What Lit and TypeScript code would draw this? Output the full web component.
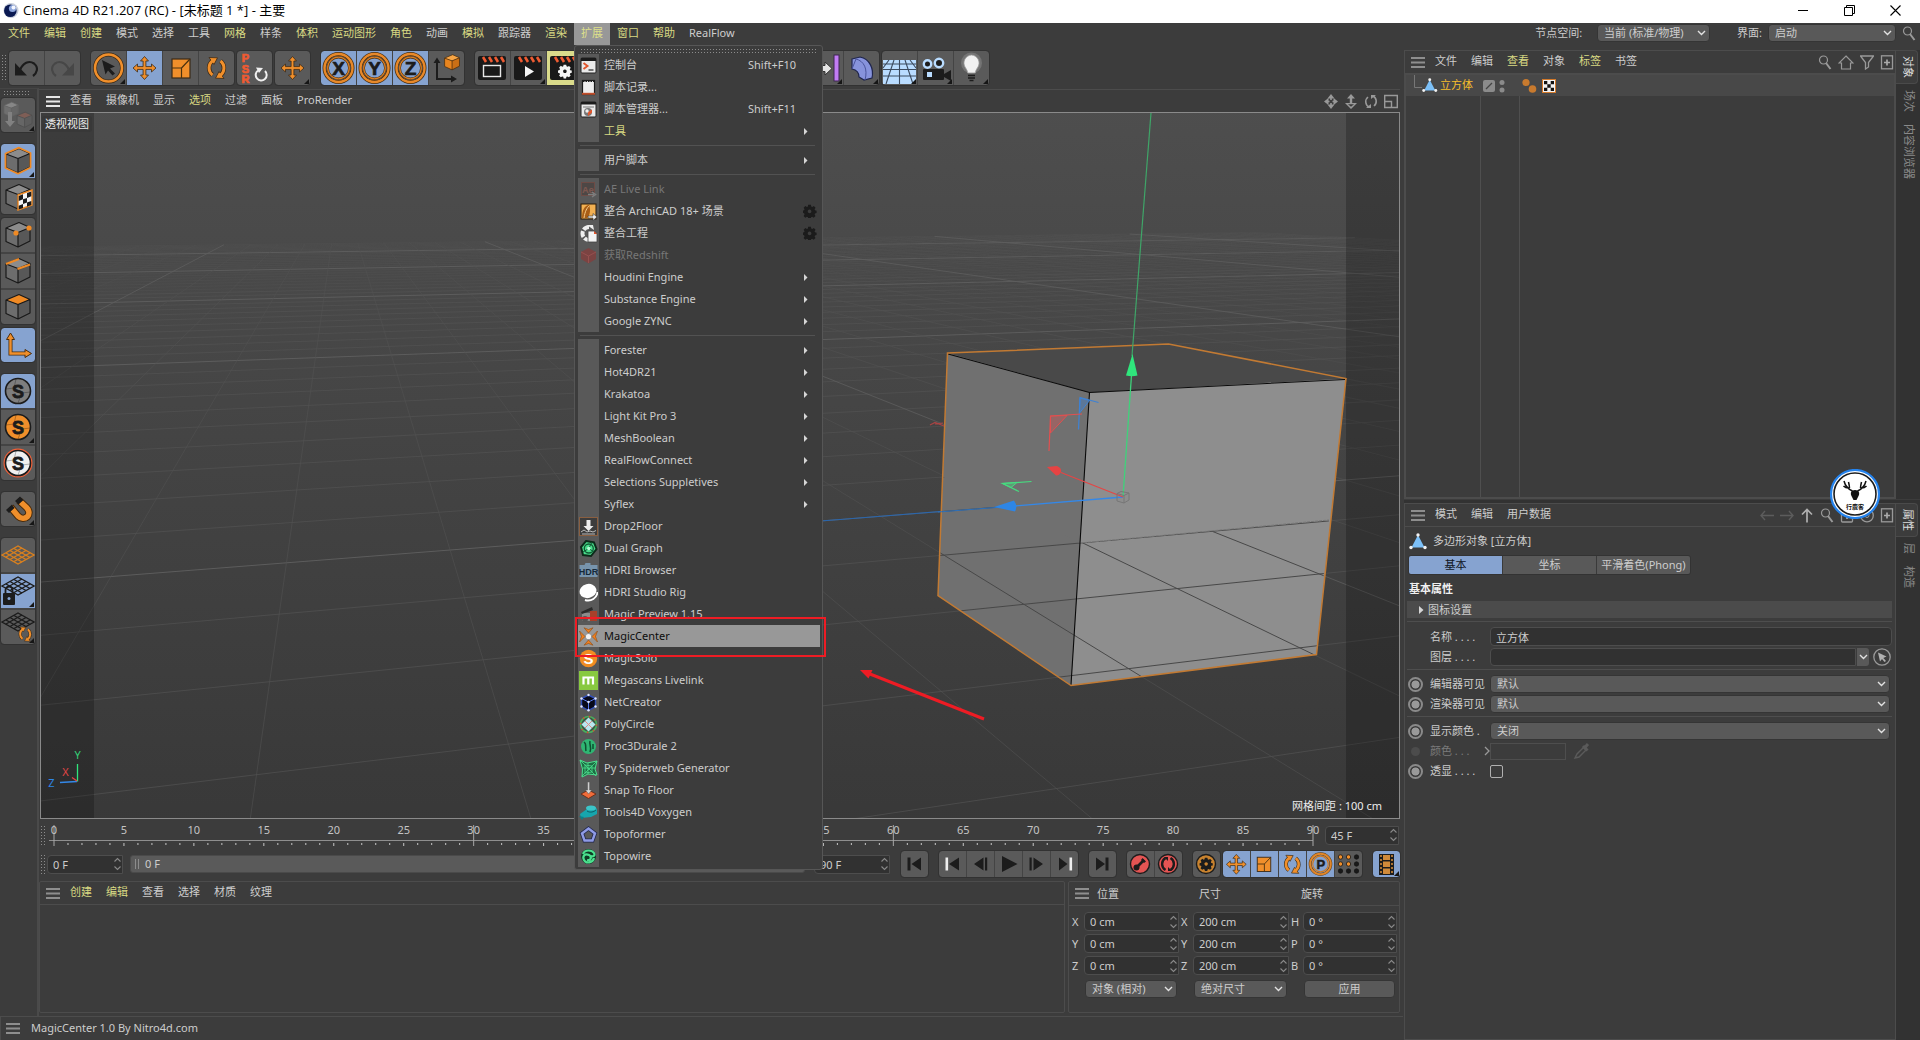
import { LitElement, html, svg, css, nothing } from "lit";
import { customElement } from "lit/decorators.js";
import { classMap } from "lit/directives/class-map.js";

const OR = "#f08f2b";
const DK = "#1c1c1c";

const icon = (w: number, h: number, body: unknown) => html`<svg class="ic" width=${w} height=${h} viewBox="0 0 ${w} ${h}" aria-hidden="true">${body}</svg>`;

/* ---------- shared glyph parts ---------- */
const corner = (w: number, h: number) => svg`<path d="M${w - 1} ${h - 1}v-5l-5 5z" fill="#161616"/>`;
const moveShape = (fill: string) => svg`<path d="M12 0.5L16 5H13.400V10.600H19V8L23.500 12L19 16V13.400H13.400V19H16L12 23.500L8 19H10.600V13.400H5V16L0.500 12L5 8V10.600H10.600V5H8Z" fill=${fill} stroke="#3a2a18" stroke-width=".8"/>`;
const rotateShape = (fill: string) => svg`
  <g fill="none" stroke="#3a2a18" stroke-width="4.400"><path d="M8 19A9 9 0 0 1 8.500 4.500"/><path d="M16 5A9 9 0 0 1 15.500 19.500"/></g>
  <path d="M4.500 1.500L13 1.800L9.500 8.500ZM19.500 22.500L11 22.200L14.500 15.500Z" fill=${fill} stroke="#3a2a18" stroke-width=".8"/>
  <g fill="none" stroke=${fill} stroke-width="3"><path d="M8 19A9 9 0 0 1 8.500 4.500"/><path d="M16 5A9 9 0 0 1 15.500 19.500"/></g>`;
const scaleShape = svg`<rect x="1" y="1" width="18" height="19" fill=${OR} stroke="#3a2a18" stroke-width="1.200"/><path d="M1 10H10.500V20M10.500 10L19 1" fill="none" stroke="#4a3210" stroke-width="1.200"/>`;
const gearPath = "M6.500 1h3.400l.4 2 1.300.6 1.900-1.100 2.200 2.300-1.200 1.800.5 1.300 2 .5v2.900l-2 .5-.5 1.200 1.100 1.900-2.200 2.200-1.900-1.200-1.400.6-.4 2H6.600l-.5-2-1.300-.6-1.900 1.200-2.200-2.200 1.200-1.900-.5-1.300-2-.5V8.200l2-.4.5-1.300L.8 4.600l2.200-2.200 1.900 1.200 1.200-.6zM8.200 7a2.300 2.300 0 1 0 .01 0z";
const cubeShape = (top = "#8c8c8c", left = "#6d6d6d", right = "#585858", edge = "#191919") => svg`
  <path d="M5 9L18 3.500L29 8.500L17 13.500Z" fill=${top}/><path d="M5 9L17 13.500V28L5 22.500Z" fill=${left}/><path d="M29 8.500L17 13.500V28L29 22Z" fill=${right}/>
  <path d="M5 9L18 3.500L29 8.500V22L17 28L5 22.500ZM5 9L17 13.500L29 8.500M17 13.500V28" fill="none" stroke=${edge} stroke-width="1.200" stroke-linejoin="round"/>`;

/* ---------- main toolbar (35 x 34) ---------- */
const curl = (c: string) => svg`<path d="M6 12V24.500H18Z" fill=${c}/><path d="M11 19C14 12 20 9 25 12.500C30 16.500 28 22 24 25" fill="none" stroke=${c} stroke-width="2.200"/>`;
const axisLetter = (l: string) => svg`<circle cx="17.500" cy="17" r="14" fill="none" stroke="#4a2f10" stroke-width="4"/><circle cx="17.500" cy="17" r="14" fill="none" stroke="#e8892a" stroke-width="2.400"/><circle cx="17.500" cy="17" r="10.800" fill="#86a3d0" stroke="#4a2f10" stroke-width="2.400"/><circle cx="17.500" cy="17" r="10.800" fill="none" stroke="#d87e24" stroke-width="1.300"/><text x="17.500" y="24" text-anchor="middle" class="heavy" font-size="19" fill=${DK} stroke=${DK} stroke-width=".7">${l}</text>`;
const clapper = (inner: unknown) => svg`<rect x="3" y="5" width="28" height="24" rx="2" fill="#191919"/><path d="M8 6l3 5M14 6l3 5M20 6l3 5M26 6l3 5" stroke="#ee5b32" stroke-width="2.600"/>${inner}`;

const TB: Record<string, unknown> = {
  undo: curl(DK),
  redo: svg`<g transform="translate(35 0) scale(-1 1)">${curl("#474747")}</g>`,
  select: svg`<circle cx="17.500" cy="17" r="13.500" fill="none" stroke="#3a2a18" stroke-width="4"/><circle cx="17.500" cy="17" r="13.500" fill="none" stroke=${OR} stroke-width="2.600"/><path d="M11 9L24 15.500L19 17.500L24 22.500L21.500 24.500L17 19.500L14.500 23.500Z" fill=${DK}/>${corner(35, 34)}`,
  move: svg`<g transform="translate(5.500 5)">${moveShape(OR)}</g>`,
  scale: svg`<g transform="translate(8 7)">${scaleShape}</g>`,
  rotate: svg`<g transform="translate(5.500 5)">${rotateShape(OR)}</g>`,
  psr: svg`<g class="heavy" font-size="11" fill="#ef5a31" stroke="#ef5a31" stroke-width=".7" text-anchor="middle"><text x="8.500" y="11">P</text><text x="8.500" y="21.500">S</text><text x="8.500" y="32">R</text></g><path d="M21 19.500A5.500 5.500 0 1 0 28 20" fill="none" stroke="#f0f0f0" stroke-width="2"/><path d="M19 16.500L26 17L22 22Z" fill="#f0f0f0"/>`,
  move2: svg`<g transform="translate(5.500 5)">${moveShape(OR)}</g>${corner(35, 34)}`,
  X: axisLetter("X"), Y: axisLetter("Y"), Z: axisLetter("Z"),
  coord: svg`<path d="M8 10V28H24" fill="none" stroke=${DK} stroke-width="2"/><path d="M4.500 12L8 6.500L11.500 12ZM22 24.500L28 28L22 31.500Z" fill=${DK}/><g transform="translate(12.500 1.500) scale(.62)">${cubeShape("#f7a545", "#e8851f", "#c96f16", "#4a2c0c")}</g>`,
  clap1: clapper(svg`<rect x="8.500" y="14.500" width="17" height="11" fill="none" stroke="#e8e8e8" stroke-width="1.400"/>`),
  clap2: svg`${clapper(svg`<path d="M14 15V26L23 20.500Z" fill="#f4f4f4"/>`)}${corner(35, 34)}`,
  clap3: clapper(svg`<g transform="translate(11.500 13) scale(.78)"><path d=${gearPath} fill="#f4f4f4" fill-rule="evenodd"/></g>`),
  array: svg`<path d="M4 14.500H17V11L24 17.500L17 24V20.500H4Z" fill="#e4e4e4" stroke="#333"/><rect x="26" y="4" width="5" height="26" fill="#c27cf5" stroke="#3c2650"/>${corner(35, 34)}`,
  bend: svg`<path d="M8 8L16 6C26 8 30 18 28 27L20 29L15 26C15 21 13 19 8 18Z" fill="#8793dc" stroke="#20264d" stroke-width="1.200"/><path d="M8 18L12 8C20 10 24 18 21 29" fill="none" stroke="#4a549c"/>${corner(35, 34)}`,
  floor: svg`<rect x="1" y="9" width="33" height="24" fill="#b9dcff"/><path d="M1 13H34M1 18.500H34M1 25H34M17.500 9V33M12 9L4 33M7 9L1 17M23 9L31 33M28 9L34 17" stroke="#3b4a5e" stroke-width="1.100"/>${corner(35, 34)}`,
  camera: svg`<rect x="5" y="18" width="21" height="11" rx="1" fill=${DK}/><path d="M26 23L33 19V30L26 26Z" fill=${DK}/><rect x="9" y="21" width="5" height="5" fill="#b9dcff"/><circle cx="9.500" cy="13" r="3.700" fill=${DK} stroke="#b9dcff" stroke-width="2.400"/><circle cx="21" cy="12" r="4.200" fill=${DK} stroke="#b9dcff" stroke-width="2.400"/>${corner(35, 34)}`,
  bulb: svg`<circle cx="17.500" cy="12" r="10.500" fill="#fff" opacity=".16"/><path d="M17.500 4A8 8 0 0 0 11 16C13 19 13.500 20 13.700 22H21.300C21.500 20 22 19 24 16A8 8 0 0 0 17.500 4Z" fill="#f1f1f1" stroke="#9a9a9a" stroke-width=".8"/><path d="M14 24.500H21M14 27H21M15.500 29.500H19.500" stroke=${DK} stroke-width="1.500"/>${corner(35, 34)}`,
};

/* ---------- mode strip (34 x 34, drawn one unit down) ---------- */
const netRows = (c: string) => svg`<g fill="none" stroke=${c} stroke-width="1.400"><path d="M1 11L17 2L33 11L17 20Z"/><path d="M5 9L21 18M9 6.500L25 15.500M13 4.500L29 13.500M5 13L21 4M9 15.500L25 6.500M13 17.500L29 9"/></g>`;
const snap = (fill: string, ring: string) => svg`<circle cx="17" cy="16" r="12.500" fill=${fill} stroke=${ring} stroke-width="1.600"/><path d="M5 14L13 13M21 18L29 17M15 4L13 13M20 20L17 28" stroke="#0004" fill="none"/><text x="17" y="22.500" class="heavy" font-size="18" text-anchor="middle" fill=${DK} stroke=${DK} stroke-width=".8">S</text>`;
const MB: Record<string, unknown> = {
  convert: svg`<g opacity=".75"><g transform="translate(0 1) scale(.6)">${cubeShape("#959595", "#777", "#6a6a6a", "#666")}</g><g transform="translate(13 11) scale(.62)">${cubeShape("#8a6055", "#6a6a6a", "#5f5f5f", "#4a4a4a")}</g><path d="M7 13h4v9h3l-5 6l-5-6h3z" fill="#8e8e8e"/></g>${corner(34, 33)}`,
  model: svg`${cubeShape()}<path d="M4.500 8.500L18 2.700L29.500 8V22.500L17 28.700L4.500 23Z" fill="none" stroke="#f08a24" stroke-width="1.800" stroke-linejoin="round"/>${corner(34, 33)}`,
  texture: svg`${cubeShape()}<path d="M17 14L31 9V24L17 29Z" fill="#f4f4f4" stroke="#f08a24" stroke-width="1.400"/><path d="M17.700 15L22 13.300V18.300L17.700 20ZM26 12L30.300 10.500V15.300L26 17ZM22 18.300L26 17V21.500L22 23ZM17.700 24.800L22 23V27L17.700 28.500ZM26 21.500L30.300 20V24L26 25.700Z" fill=${DK}/>`,
  points: svg`${cubeShape()}<circle cx="15" cy="14" r="2.600" fill="#f08a24"/><circle cx="28" cy="9" r="2.600" fill="#f08a24"/>`,
  edges: svg`${cubeShape()}<path d="M5 9L18 4M16.500 14L29 9.500" stroke="#f08a24" stroke-width="2"/>`,
  polys: cubeShape("#f08a24"),
  axis: svg`<path d="M9.500 9V24.500H25" fill="none" stroke="#4a2c0c" stroke-width="4"/><path d="M5.500 10.500L9.500 4L13.500 10.500ZM24 20.500L30.500 24.500L24 28.500Z" fill=${OR} stroke="#4a2c0c" stroke-width="1"/><path d="M9.500 9V24.500H25" fill="none" stroke=${OR} stroke-width="2.400"/>`,
  snapG: snap("#7e7e7e", DK),
  snapO: svg`${snap(OR, DK)}${corner(34, 33)}`,
  snapW: svg`<circle cx="17" cy="16" r="13.800" fill="none" stroke="#f06038" stroke-width="1.400"/>${snap("#f0f0f0", DK)}`,
  magnet: svg`<path d="M9.500 14L17 23C20 26 24 26 26.500 23.500C29 20.500 28 17 25.500 14.500L18 7.500" fill="none" stroke="#4a2c0c" stroke-width="7.500"/><path d="M9.500 14L17 23C20 26 24 26 26.500 23.500C29 20.500 28 17 25.500 14.500L18 7.500" fill="none" stroke=${OR} stroke-width="5.500"/><path d="M5 17L11 11.500L13.500 15L8 20ZM14 8L19 3.500L22.500 7L17.500 11.500Z" fill=${DK}/>${corner(34, 33)}`,
  grid: svg`<g transform="translate(0 5)">${netRows("#d9801f")}</g>`,
  gridLock: svg`${netRows(DK)}<rect x="2" y="18" width="12" height="12" rx="1" fill=${DK}/><path d="M4.500 18.500V15a3.500 3.500 0 0 1 7 0V18.500" fill="none" stroke=${DK} stroke-width="1.800"/><circle cx="8" cy="23.500" r="1.500" fill="#86a3d0"/>${corner(34, 33)}`,
  gridRot: svg`${netRows(DK)}<g transform="translate(16 15) scale(.68)">${rotateShape(OR)}</g>${corner(34, 33)}`,
};
for (const name of Object.keys(MB)) MB[name] = svg`<g transform="translate(0 1)">${MB[name]}</g>`;

/* ---------- playback (27 x 26) ---------- */
const PB: Record<string, unknown> = {
  first: svg`<path d="M6.500 6.500h3v13h-3zM20 6.500v13L10.500 13z" fill=${DK}/>`,
  prevKey: svg`<path d="M6.500 6.500h2.600v13H6.500z" fill="#eee"/><path d="M20 6.500v13L10 13z" fill=${DK}/>`,
  prev: svg`<path d="M16.500 6.500v13L7 13zM18 6.500h2.200v13H18z" fill=${DK}/>`,
  play: svg`<path d="M7 5L22.500 13L7 21Z" fill=${DK}/>`,
  next: svg`<path d="M10.500 6.500v13L20 13zM6.500 6.500h2.200v13H6.500z" fill=${DK}/>`,
  nextKey: svg`<path d="M8 6.500v13L16.500 13z" fill=${DK}/><path d="M18.500 6.500h2.600v13h-2.600z" fill="#eee"/>`,
  last: svg`<path d="M7 6.500v13L16 13zM16.500 6.500h3v13h-3z" fill=${DK}/>`,
  key: svg`<circle cx="13" cy="13" r="9.500" fill="#e35453" stroke=${DK} stroke-width="1.400"/><path d="M9 17L17 9" stroke=${DK} stroke-width="2.600"/><circle cx="9.500" cy="16.500" r="3" fill=${DK}/><path d="M15.500 7L19 10.500L17 12L14 9Z" fill=${DK}/>`,
  auto: svg`<circle cx="13" cy="13" r="9.500" fill="#e35453" stroke=${DK} stroke-width="1.400"/><path d="M10.500 7A7 7 0 0 0 10.500 19M15.500 7A7 7 0 0 1 15.500 19" fill="none" stroke=${DK} stroke-width="2.400"/><path d="M9 6h4v4zM17 20h-4v-4z" fill=${DK}/>`,
  opts: svg`<circle cx="13" cy="13" r="9.500" fill="#c9832f" stroke=${DK} stroke-width="1.400"/><g transform="translate(7 6) scale(.75)"><path d=${gearPath} fill=${DK} fill-rule="evenodd"/></g>`,
  move: svg`<g transform="translate(3 3) scale(.86)">${moveShape(OR)}</g>`,
  scale: svg`<g transform="translate(5.500 5.500) scale(.75)">${scaleShape}</g>`,
  rotate: svg`<g transform="translate(3 3) scale(.86)">${rotateShape(OR)}</g>`,
  P: svg`<circle cx="13.500" cy="13" r="10.300" fill="none" stroke="#5b3d18" stroke-width="3"/><circle cx="13.500" cy="13" r="10.300" fill="none" stroke="#e0862a" stroke-width="2"/><circle cx="13.500" cy="13" r="7.800" fill="#86a3d0" stroke="#d07c26" stroke-width="1.200"/><text x="13.800" y="17.500" class="heavy" font-size="13" text-anchor="middle" fill=${DK} stroke=${DK} stroke-width=".5">P</text>`,
  dots: svg`<g stroke="#161616" stroke-width=".8">${[5.5, 13.5, 21.5].map((x, i) => [6, 13, 20].map((y, j) => svg`<circle cx=${x} cy=${y} r="2.200" fill=${i < 2 && j < 2 ? OR : "#191919"}/>`))}</g>`,
  film: svg`<rect x="6" y="3" width="15" height="21" fill=${DK}/><path d="M10 4h7v5h-7zM10 10.500h7v5.500h-7zM10 17.500h7V23h-7z" fill="#d08a3a"/><path d="M8 4V24M19 4V24" stroke="#d08a3a" stroke-width="1.600" stroke-dasharray="2 2"/>${corner(27, 26)}`,
};

/* ---------- popup menu icons (19 x 19) ---------- */
const MI: Record<string, unknown> = {
  console: svg`<rect x="2" y="2" width="15" height="15" rx="1" fill="#e9e9e9" stroke="#222"/><path d="M2 2h15v3H2z" fill="#1b1b1b"/><path d="M4.500 7L8.500 10L4.500 13" fill="none" stroke="#e2552c" stroke-width="1.900"/><path d="M9.500 14h5" stroke="#333" stroke-width="1.300"/>`,
  log: svg`<rect x="3.500" y="2.500" width="12" height="14" fill="#eee" stroke="#1b1b1b" stroke-width="1.200"/><path d="M4 3h11" stroke="#1b1b1b" stroke-width="2.200" stroke-dasharray="1.500 1"/><path d="M3 15.800h13" stroke="#c04f2c" stroke-width="2"/>`,
  manager: svg`<rect x="2" y="2" width="15" height="15" rx="1" fill="#e9e9e9" stroke="#222"/><path d="M2 2h15v2.500H2z" fill="#1b1b1b"/><path d="M4 7h11" stroke="#777"/><circle cx="9" cy="12" r="4" fill="#777"/><path d="M9 12l4-2.500v3L9 16z" fill="#e2552c"/><circle cx="8" cy="11" r="1.700" fill="#eee"/>`,
  ae: svg`<rect x="2.500" y="2.500" width="13" height="13" fill="#4d4745" stroke="#6d4b45"/><text x="9" y="12.500" text-anchor="middle" font-size="9" font-weight="700" fill="#7b5750">Ae</text><path d="M9 14.500h6M13 12l3.500 2.500L13 17" stroke="#7e7e7e" stroke-width="1.500" fill="none"/>`,
  archi: svg`<rect x="2" y="2" width="15" height="15" fill="#f2b052" stroke="#2a1a0a"/><path d="M3 16C3 8 6 3 10 3C12 8 11 13 8 16Z" fill="#a85d16"/><path d="M5 16C6 9 8 6 10 4" stroke="#f6cf8d" fill="none"/><path d="M9 14h5v-2.500l4 3.500l-4 3.500V16H9z" fill="#eee" stroke="#333" stroke-width=".6"/>`,
  project: svg`<path d="M10 3A6.500 6.500 0 1 0 10 16" fill="none" stroke="#eee" stroke-width="4" stroke-dasharray="6 1.500"/><path d="M9 7h6l3 3v8H9z" fill="#f4f4f4" stroke="#444" stroke-width=".8"/><path d="M15 7v3h3z" fill="#e2552c"/><path d="M8 1h6l1 5z" fill="#eee"/>`,
  redshift: svg`<path d="M9.500 2L17 6V13L9.500 17.500L2 13V6Z" fill="#7b4342"/><path d="M2 6L9.500 10L17 6M9.500 10V17" stroke="#96504f" fill="none"/>`,
  drop: svg`<rect x=".5" y=".5" width="18" height="18" fill="#3d3d3d" stroke="#8a5f40"/><path d="M7.500 3h4v6h3l-5 5l-5-5h3z" fill="#ececec"/><path d="M2 15l3-2 3 2 3-1 3 1 3-1.500M3 17h13" stroke="#bbb" fill="none"/>`,
  dual: svg`<path d="M7 2L15 3.500L17.500 10L12 17L4 16L2 8Z" fill="#49dc8b" stroke="#0d2a1a" stroke-width="2"/><circle cx="9.800" cy="9.500" r="4.500" fill="none" stroke="#0f5a33" stroke-width="1.300"/><path d="M9.800 9.500L13 3M9.800 9.500L4 13M9.800 9.500L15 13" stroke="#0f5a33"/><circle cx="9.800" cy="9.500" r="1.700" fill="#b5ffd5"/>`,
  hdr: svg`<path d="M.5 4h5l1-2h5v2h7v12H.5z" fill="#7794ad"/><text x="9.500" y="14" text-anchor="middle" class="heavy" font-size="9" fill="#15293a">HDR</text>`,
  studio: svg`<ellipse cx="9" cy="8" rx="8.500" ry="7" transform="rotate(-15 9 8)" fill="#fff"/><path d="M6 17C12 19 18 15 18.500 9" fill="none" stroke="#fff" stroke-width="2"/>`,
  preview: svg`<rect x="3" y="8" width="9" height="8" fill="#8b8b8b"/><path d="M11 6h7v10h-7z" fill="#a8402a"/><path d="M2 7L13 2l1 3L3 9z" fill="#2a2a2a"/><circle cx="6" cy="14" r="3" fill="#555"/>`,
  center: svg`<g fill="#f07f1f" stroke="#8b4a12" stroke-width=".6"><path d="M5 .8L9.500 2.500L14 .8L9.500 6Z"/><path d="M5 18.200L9.500 16.500L14 18.200L9.500 13Z"/><path d="M.5 4L6 9.500L.5 15L2.500 9.500Z"/><path d="M18.500 4L13 9.500L18.500 15L16.500 9.500Z"/></g><circle cx="9.500" cy="9.500" r="2.600" fill="#f2f2f2"/>`,
  solo: svg`<circle cx="9.500" cy="9.500" r="8.700" fill="#f28c22"/><text x="9.500" y="15" text-anchor="middle" class="heavy" font-size="15" fill="#fff">S</text>`,
  mega: svg`<path d="M0 0h19v19H0z" fill="#88c940"/><path d="M4.500 13.500V6.500h9.500v7M9.300 6.500v7" fill="none" stroke="#fff" stroke-width="2.200"/>`,
  net: svg`<path d="M9.500 2L16.500 5.500V13.500L9.500 17.500L2.500 13.500V5.500Z" fill="#07091a" stroke="#3350b8" stroke-width="1.400"/><path d="M2.500 5.500L9.500 9L16.500 5.500M9.500 9V17" stroke="#5b7df0" fill="none"/><g fill="#dfe6ff"><circle cx="9.500" cy="2" r="1.200"/><circle cx="16.500" cy="5.500" r="1.200"/><circle cx="16.500" cy="13.500" r="1.200"/><circle cx="9.500" cy="17.300" r="1.200"/><circle cx="2.500" cy="13.500" r="1.200"/><circle cx="2.500" cy="5.500" r="1.200"/><circle cx="9.500" cy="9" r="1.200"/></g>`,
  poly: svg`<circle cx="9.500" cy="9.500" r="8" fill="#3a5a48" stroke="#48b05c" stroke-width="1.600"/><circle cx="9.500" cy="9.500" r="8" fill="none" stroke="#d84a32" stroke-width="1.600" stroke-dasharray="1.500 4.800"/><path d="M9.500 2.500L16.500 9.500L9.500 16.500L2.500 9.500Z" fill="#b9e6ee"/><path d="M6 6L13 13M13 6L6 13" stroke="#e0897f" fill="none"/>`,
  proc: svg`<circle cx="9.500" cy="9.500" r="7.500" fill="#2fb673"/><path d="M5 5C8 7 6 10 7 14M11 4C10 8 13 10 11 15M14 7v5" stroke="#0e4f30" stroke-width="1.500" fill="none"/>`,
  spider: svg`<path d="M1 1L8 4L18 2L16 10L18 16L9 15L3 18L3.500 10Z" fill="#1d6e44" stroke="#4be08e"/><path d="M1 1L17 17M18 2L3 17M9 4V15M4 9h13M6 6l7 1 0 6-7 1z" stroke="#4be08e" stroke-width=".8" fill="none"/>`,
  snapf: svg`<path d="M9.500 9L17 13L9.500 17.500L2 13Z" fill="#f06c3a" stroke="#612411" stroke-width=".8"/><path d="M8.600 1h2v8h2.200l-3.200 4l-3.200-4h2.200z" fill="#d6d6d6" stroke="#555" stroke-width=".5"/>`,
  vox: svg`<path d="M1 11L8 6L16 4L18 6V11L12 14L2 15Z" fill="#16a5ad"/><ellipse cx="12" cy="5" rx="5" ry="2.500" fill="#3cc5c9"/><path d="M0 13l5 1-2 3z" fill="#0d7e88"/><path d="M8 8c3 2 7 1 9-1" stroke="#0a5d66" fill="none"/>`,
  topof: svg`<path d="M9.500 3.500L16 8.500L13.500 15.500H5.500L3 8.500Z" fill="none" stroke="#20264d" stroke-width="4"/><path d="M9.500 3.500L16 8.500L13.500 15.500H5.500L3 8.500Z" fill="none" stroke="#8f9be6" stroke-width="2.400"/>`,
  topow: svg`<circle cx="9.500" cy="9.500" r="7.500" fill="#0f3a24"/><path d="M4 7C6 2 13 3 15 6C17 10 12 10 10 8C6 6 3 9 5 13C7 17 14 16 15 11M8 13C11 14 13 11 11 9" fill="none" stroke="#4be08e" stroke-width="2.200"/>`,
};

type Item = { t: string; i?: string; k?: string; sub?: boolean; gear?: boolean; dim?: boolean; hot?: boolean; on?: boolean };
const MENU: Item[][] = [
  [{ t: "控制台", i: "console", k: "Shift+F10" }, { t: "脚本记录...", i: "log" }, { t: "脚本管理器...", i: "manager", k: "Shift+F11" }, { t: "工具", sub: true, hot: true }],
  [{ t: "用户脚本", sub: true }],
  [{ t: "AE Live Link", i: "ae", dim: true }, { t: "整合 ArchiCAD 18+ 场景", i: "archi", gear: true }, { t: "整合工程", i: "project", gear: true }, { t: "获取Redshift", i: "redshift", dim: true }, { t: "Houdini Engine", sub: true }, { t: "Substance Engine", sub: true }, { t: "Google ZYNC", sub: true }],
  [
    ...["Forester", "Hot4DR21", "Krakatoa", "Light Kit Pro 3", "MeshBoolean", "RealFlowConnect", "Selections Suppletives", "Syflex"].map((t) => ({ t, sub: true })),
    { t: "Drop2Floor", i: "drop" }, { t: "Dual Graph", i: "dual" }, { t: "HDRI Browser", i: "hdr" }, { t: "HDRI Studio Rig", i: "studio" },
    { t: "Magic Preview 1.15", i: "preview" }, { t: "MagicCenter", i: "center", on: true }, { t: "MagicSolo", i: "solo" }, { t: "Megascans Livelink", i: "mega" },
    { t: "NetCreator", i: "net" }, { t: "PolyCircle", i: "poly" }, { t: "Proc3Durale 2", i: "proc" }, { t: "Py Spiderweb Generator", i: "spider" },
    { t: "Snap To Floor", i: "snapf" }, { t: "Tools4D Voxygen", i: "vox" }, { t: "Topoformer", i: "topof" }, { t: "Topowire", i: "topow" },
  ],
];

const MAIN_MENU = "*文件 *编辑 *创建 模式 选择 工具 *网格 样条 *体积 *运动图形 *角色 动画 *模拟 跟踪器 *渲染 *扩展 *窗口 *帮助 RealFlow".split(" ");

const bars = icon(14, 11, svg`<path d="M0 1h14M0 5.500h14M0 10h14" stroke="currentColor" stroke-width="2"/>`);
const chevron = icon(9, 6, svg`<path d="M1 1L4.500 4.500L8 1" fill="none" stroke="#e2e2e2" stroke-width="1.400"/>`);
const spinner = icon(9, 14, svg`<path d="M1.500 4.500L4.500 1.500L7.500 4.500M1.500 9.500L4.500 12.500L7.500 9.500" fill="none" stroke="#8a8a8a" stroke-width="1.100"/>`);
const glass = icon(14, 15, svg`<circle cx="5.500" cy="5" r="4" fill="none" stroke="#999" stroke-width="1.200"/><path d="M8 8L12.500 14" stroke="#999" stroke-width="2"/>`);
const plusBox = icon(14, 15, svg`<rect x="1.500" y=".8" width="11" height="13" fill="none" stroke="#999" stroke-width="1.300"/><path d="M4 7.500h6M7 4.500v6" stroke="#aaa" stroke-width="1.700"/>`);
const polyShape = svg`<path d="M9 2L15.500 14.500H2.500Z" fill="#7cc0f8"/><g fill="#f2f2f2"><circle cx="9" cy="2" r="1.700"/><circle cx="2" cy="14.500" r="1.700"/><circle cx="16" cy="14.500" r="1.700"/></g>`;
const polyObj = icon(18, 17, polyShape);
const polySmall = icon(16, 15, svg`<g transform="scale(.86)">${polyShape}</g>`);

const select = (label: string, value: string) => html`<span class="sel"><select aria-label=${label}><option>${value}</option></select>${chevron}</span>`;
const num = (label: string, value: string, show = true) => html`<label class="num">${show ? html`<span>${label}</span>` : nothing}<span class="numbox"><input type="text" aria-label=${label} .value=${value} />${spinner}</span></label>`;
const menus = (list: string) => list.split(" ").map((m) => html`<button class=${classMap({ mi: true, hot: m[0] === "*" })}>${m.replace("*", "")}</button>`);

/* ---------- perspective floor grid ---------- */
const HORIZON = 187;
const VX = 5090;
const rowY = (k: number, x: number) => HORIZON + (1 / (0.002531 + 0.0003008 * k)) * ((VX - x) / 5050);
const COL_VP = { x: 340, y: 184 };
const colSlope = (n: number) => (250.4 + 280.3 * n - COL_VP.x) / 634;
const EDGE_COL = 43;
const FAR_ROW = 47;

/* crossing of column n with row k */
function cross(n: number, k: number): [number, number] {
  const s = colSlope(n);
  const a = 1 / (0.002531 + 0.0003008 * k) / 5050;
  const y = (HORIZON + a * (VX - COL_VP.x + s * COL_VP.y)) / (1 + a * s);
  return [COL_VP.x + s * (y - COL_VP.y), y];
}

function floorGrid(minor: string, major: string, fade = true) {
  const out = [];
  for (let k = -4; k <= FAR_ROW; k++) {
    const [x2, y2] = cross(EDGE_COL, k);
    const big = k % 10 === 0;
    const o = !fade ? 1 : big ? 0.95 : k > 22 ? 0.45 : 0.7;
    out.push(svg`<line x1="0" y1=${rowY(k, 0)} x2=${x2} y2=${y2} stroke=${big ? major : minor} stroke-opacity=${o}/>`);
  }
  for (let n = -13; n <= EDGE_COL; n++) {
    const [x1, y1] = cross(n, FAR_ROW);
    const big = (n + 4) % 10 === 0;
    const o = !fade ? 1 : big ? 0.8 : n > 12 || n < -4 ? 0.4 : 0.6;
    out.push(svg`<line x1=${x1} y1=${y1} x2=${COL_VP.x + colSlope(n) * 700} y2=${COL_VP.y + 700} stroke=${big ? major : minor} stroke-opacity=${o}/>`);
  }
  return out;
}

const scene = html`<svg class="scene" viewBox="41 113 1358 705" preserveAspectRatio="xMidYMid slice" role="img" aria-label="透视视图">
  <defs>
    <linearGradient id="bg" x1="0" y1="0" x2="0" y2="1"><stop offset="0" stop-color="#4e4e4e"/><stop offset="1" stop-color="#383838"/></linearGradient>
    <clipPath id="front"><path d="M943 477L1080 543L1329 520L1316 655L1071 686L938 596Z"/></clipPath>
  </defs>
  <rect x="0" y="100" width="1500" height="740" fill="url(#bg)"/>
  ${floorGrid("#525252", "#5e5e5e")}
  <path d="M41 113H94V818H41ZM1346 113H1399V818H1346Z" fill="#000" fill-opacity=".22"/>
  <path d="M1123 497L840 519.500L700 530" stroke="#2a66ad" stroke-width="1.200" fill="none"/>
  <path d="M947.500 353L1168.500 344L1346 378.500L1089.500 392.500Z" fill="#494949"/>
  <path d="M947.500 353L1089.500 392.500L1071 685.500L938 595.500Z" fill="#707070"/>
  <path d="M1089.500 392.500L1346 378.500L1316.500 654.500L1071 685.500Z" fill="#8e8e8e"/>
  <g clip-path="url(#front)">${floorGrid("#484848", "#484848", false)}</g>
  <path d="M1080 543L1329 520" stroke="#777" stroke-dasharray="3 1"/>
  <path d="M948 354L1089.500 392.500L1345 379.500M1089.500 392.500L1071 685" fill="none" stroke="#0a0a0a" stroke-width="1.100"/>
  <path d="M947.500 353L1168.500 344L1346 378.500L1316.500 654.500L1071 685.500L938 595.500Z" fill="none" stroke="#c27a33" stroke-width="1.500"/>
  <path d="M1151 113L1132 356" stroke="#3fa568" stroke-width="1.200"/>
  <path d="M1131.500 375L1123 497" stroke="#3fd27b" stroke-width="1.300"/>
  <path d="M1132.500 354L1126 375.500Q1132 377 1137.500 375.500Z" fill="#2fe67c"/>
  <path d="M1123 497L1015 506" stroke="#3488e8" stroke-width="1.300"/><path d="M1015 506L938 512" stroke="#2f70b8" stroke-width="1.200"/>
  <path d="M994 507L1014 500.500Q1018 506 1015 511.500Z" fill="#2e86e6"/>
  <path d="M1123 497L1061 472.500" stroke="#e54545" stroke-width="1.200"/>
  <path d="M1047 467L1057 466Q1062 468 1061 472Q1059 476 1056 475.500Z" fill="#e64343"/>
  <path d="M1117 493.500L1121 491.500L1129 493V500L1124 503L1117 501ZM1117 493.500L1124 495.500L1129 493M1124 495.500V503" fill="none" stroke="#777"/>
  <path d="M1098.500 402.500L1080 397.500L1078.500 429.500" fill="none" stroke="#3e82d4" stroke-width="1.200"/><path d="M1080 398L1089.500 400.500L1079.500 413Z" fill="#3e82d4" fill-opacity=".4" stroke="#3e82d4"/>
  <path d="M1082 414L1050.500 416L1049 451" fill="none" stroke="#e05050" stroke-width="1.200"/><path d="M1050.500 416L1067 415.500L1050.500 433Z" fill="#e05050" fill-opacity=".35" stroke="#e05050"/>
  <path d="M1031.500 481.500L1002.500 483.500L1019 491.500" fill="none" stroke="#47dc80" stroke-width="1.200"/><path d="M1002.500 483.500L1017 482.500L1011 487.500Z" fill="#47dc80" fill-opacity=".4" stroke="#47dc80"/>
  <path d="M930 425L935 422.500L944 426M935 424L943 423" fill="none" stroke="#a84444" stroke-width="1.200"/>
  <path d="M77.500 764V781.500" stroke="#2fe67c" stroke-width="1.300"/><path d="M60 782.500L77 781.500" stroke="#3488e8" stroke-width="1.500"/><path d="M72 777.500L77 781" stroke="#e54545" stroke-width="1.300"/>
  <g font-size="11" text-anchor="middle"><text x="77.500" y="759" fill="#35d077">Y</text><text x="65.500" y="776" fill="#e04545">X</text><text x="51.500" y="787" fill="#2e86e6">Z</text></g>
  <path d="M984 719L870 674" stroke="#ee1c24" stroke-width="3"/><path d="M860 670L872.500 670L868.500 678.500Z" fill="#ee1c24"/>
</svg>`;

@customElement("app-root")
export class AppRoot extends LitElement {
  static styles = css`
    :host { display: flex; flex-direction: column; min-height: 100vh; background: #3c3c3c; color: #cdcdcd; font: 11px/16px "Noto Sans", "Noto Sans CJK SC", sans-serif; overflow: hidden; }
    * { box-sizing: border-box; }
    button, input, select { font: inherit; color: inherit; border: 0; margin: 0; padding: 0; background: none; border-radius: 0; outline: 0; }
    .ic { display: block; flex: none; }
    .heavy { font-family: "Liberation Sans", sans-serif; font-weight: 900; }
    .title { display: flex; align-items: center; height: 23px; background: #fff; color: #000; font: 13px/18px "Open Sans", "Noto Sans CJK SC", sans-serif; padding: 0 2px 3px 3px; }
    .title h1 { font: inherit; margin: 0 auto 0 4px; }
    .win { width: 46px; height: 19px; display: grid; place-items: center; }
    .menubar { display: flex; height: 22px; padding: 0 2px 0 1px; }
    .mi { padding: 0 7px 2px; white-space: nowrap; height: 22px; }
    .hot { color: #d8d983; }
    .open { position: relative; }
    .open > .mi { background: #989898; color: #dfe08a; }
    .push { margin-left: auto; }
    .opt { display: flex; align-items: center; gap: 6px; height: 20px; }
    .opt .sel { width: 113px; }
    .opt + .opt { margin-left: 27px; }
    .opt.wide .sel { width: 128px; }
    .find { margin: 3px 2px 0 6px; align-self: flex-start; }
    .sel { display: inline-grid; align-items: center; height: 18px; }
    .sel > * { grid-area: 1 / 1; }
    .sel .ic { justify-self: end; margin-right: 4px; pointer-events: none; }
    .sel select { appearance: none; width: 100%; height: 18px; background: #595959; border: 1px solid #353535; border-radius: 4px; padding: 0 16px 1px 6px; }
    .body { flex: 1; display: grid; grid-template-columns: minmax(0, 1fr) 517px; }
    .main { display: flex; flex-direction: column; min-width: 0; }
    .tools { display: flex; align-items: center; height: 44px; padding: 2px 0 0 1px; }
    .grip { width: 5px; height: 28px; flex: none; background: radial-gradient(circle, #8c8c8c 0.7px, transparent 1px) 0 0 / 3px 3px; }
    .group { display: flex; gap: 1px; border-radius: 3px; overflow: hidden; outline: 1px solid #323232; background: #444; }
    .tools .group { margin-left: 11px; }
    .tools .group.near { margin-left: 3px; }
    .tools .group.first { margin-left: 3px; }
    .tools .group.late { margin-left: 226px; }
    .tb { background: #5a5a5a; display: block; }
    .tb.on { background: #86a3d0; }
    .tb.warn { background: #dadb8b; }
    .work { flex: 1; display: flex; }
    .modes { width: 39px; padding: 1px 0 0 1px; display: flex; flex-direction: column; flex: none; border-top: 1px solid #454545; border-right: 2px solid #4a4a4a; margin-top: -1px; }
    .modes .group { flex-direction: column; gap: 2px; width: 34px; margin-bottom: 12px; }
    .modes .group.tight { margin-bottom: 4px; }
    .hgrip { width: 28px; height: 5px; margin: 0 0 3px 2px; background: radial-gradient(circle, #8c8c8c 0.7px, transparent 1px) 0 0 / 3px 3px; }
    .center { flex: 1; display: flex; flex-direction: column; min-width: 0; margin-right: 3px; }
    .phead { display: flex; align-items: center; height: 23px; padding: 0 2px 0 7px; color: #cdcdcd; border-top: 1px solid #4c4c4c; }
    .phead .mi:first-of-type { margin-left: 3px; }
    .phead .mi { height: 20px; }
    .phead > .ic:first-child { color: #8e8e8e; }
    .phead.view > .ic:first-child { color: #e6e6e6; }
    .icons { display: flex; align-items: center; gap: 6px; margin-left: auto; }
    .view-box { flex: 1; position: relative; min-height: 400px; border: 1px solid #8a8a8a; margin-left: 1px; overflow: hidden; }
    .scene { position: absolute; inset: 0; width: 100%; height: 100%; display: block; }
    .tag { position: absolute; left: 1px; top: 3px; padding: 0 3px; color: #ececec; background: #383838; border-radius: 3px; }
    .tag.br { left: auto; top: auto; right: 14px; bottom: 4px; background: none; }
    .ruler { display: flex; height: 32px; padding: 6px 1px 6px 1px; }
    .ruler .grip, .play .grip { height: 20px; }
    .scale { flex: 1; min-width: 0; height: 26px; margin: -3px 12px 0 9px; overflow: visible; fill: #c4c4c4; }
    .num { display: flex; align-items: center; gap: 4px; }
    .numbox { display: grid; align-items: center; flex: 1; min-width: 0; }
    .numbox > * { grid-area: 1 / 1; }
    .numbox .ic { justify-self: end; margin-right: 1px; }
    .num input, .text { width: 100%; height: 19px; background: #313131; border: 1px solid #4d4d4d; border-radius: 4px 0 0 4px; padding: 0 12px 0 5px; }
    .ruler .num { width: 74px; }
    .play .num { width: 76px; }
    .play { display: flex; align-items: center; height: 26px; padding: 0 0 0 1px; margin-bottom: 4px; }
    .play .num { margin-left: 2px; }
    .play .num + .range { margin: 0 7px; }
    .range { flex: 1; min-width: 0; display: grid; height: 18px; align-items: center; background: #5a5a5a; border: 1px solid #4a4a4a; border-radius: 3px; }
    .range > * { grid-area: 1 / 1; }
    .range span { padding-left: 14px; }
    .range input { appearance: none; width: 100%; height: 10px; margin-left: 4px; }
    .range input::-webkit-slider-thumb { appearance: none; width: 4px; height: 10px; border: solid #8c8c8c; border-width: 0 1px; }
    .play .group { margin-left: 11px; }
    .play .group.near { margin-left: 3px; }
    .bottom { display: flex; gap: 3px; height: 132px; margin-bottom: 3px; }
    .panel { border: 1px solid #4c4c4c; border-radius: 2px; }
    .panel .phead { border-top: 0; border-bottom: 1px solid #4c4c4c; padding-left: 6px; }
    .mat { flex: 1; min-width: 0; }
    .coords { width: 332px; flex: none; }
    .coords .phead { height: 24px; }
    .coords .phead b { font-weight: 400; width: 102px; flex: none; }
    .coords .phead b:first-of-type { margin-left: 8px; }
    .cgrid { display: grid; grid-template-columns: 107px 108px 106px; column-gap: 2px; row-gap: 3px; padding: 6px 3px; }
    .num > span:first-child:not(:only-child) { width: 8px; }
    .cgrid .sel, .apply { margin: 2px 2px 0 13px; }
    .apply { height: 18px; background: #595959; border: 1px solid #353535; border-radius: 4px; }
    .status { height: 24px; display: flex; align-items: center; gap: 11px; padding-left: 5px; border: 1px solid #4c4c4c; border-width: 1px 0 0 1px; padding-bottom: 1px; }
    .status .ic { color: #8e8e8e; }
    .side { display: flex; flex-direction: column; padding-top: 5px; background: #323232; background-clip: content-box; margin-left: 1px; }
    .dock { display: grid; grid-template-columns: minmax(0, 1fr) 24px; }
    .dock > .panel { background: #3c3c3c; border-radius: 0; }
    .dock.obj { height: 450px; border-bottom: 1px solid #3c3c3c; }
    .dock.att { flex: 1; margin-top: 3px; }
    .tabs { display: flex; flex-direction: column; align-items: start; background: #323232; color: #8a8a8a; }
    .tabs button { writing-mode: vertical-rl; text-orientation: sideways; width: 22px; padding: 6px 0 6px 3px; line-height: 18px; }
    .tabs button.on { background: #3c3c3c; border: 1px solid #4a4a4a; border-left: 0; border-radius: 0 4px 4px 0; color: #dcdcdc; padding-top: 5px; padding-bottom: 5px; }
    .obj > .panel { display: flex; flex-direction: column; }
    .tree { flex: 1; display: flex; flex-direction: column; border: 1px solid #4c4c4c; }
    .node { display: grid; grid-template-columns: 75px 39px 1fr; height: 21px; background: #484848; }
    .node > * { display: flex; align-items: center; }
    .node .name { color: #f6bd2c; margin-left: 2px; padding-bottom: 1px; }
    .cols { flex: 1; display: grid; grid-template-columns: 75px 39px 1fr; }
    .cols i { border-right: 1px solid #4f4f4f; }
    .att > .panel { padding-bottom: 20px; position: relative; }
    .side .phead { padding-right: 1px; }
    .what { display: flex; align-items: center; gap: 6px; padding: 5px 4px; height: 28px; }
    .seg { display: inline-flex; gap: 1px; margin: 0 3px; background: #3a3a3a; border: 1px solid #333; border-radius: 3px; overflow: hidden; }
    .seg button { width: 93px; height: 18px; background: #595959; padding-bottom: 1px; }
    .seg button.on { background: #86a3d0; color: #10151f; }
    .att h2 { font-size: 11px; line-height: 16px; margin: 6px 4px 4px; color: #f0f0f0; }
    .fold { display: flex; align-items: center; gap: 4px; width: calc(100% - 5px); height: 17px; margin: 0 0 3px 2px; padding-left: 12px; background: #4b4b4b; }
    .rows { margin: 0 3px 0 2px; border-top: 1px solid #4e4e4e; padding: 5px 0 3px; display: grid; row-gap: 2px; }
    .row { display: grid; grid-template-columns: 23px 60px minmax(0, 1fr); align-items: center; min-height: 18px; }
    .row .lab { display: flex; overflow: hidden; white-space: nowrap; width: 58px; }
    .row.dim .lab { color: #7a7a7a; }
    .row .sel { margin-right: 2px; }
    .row input[type="radio"] { appearance: none; width: 15px; height: 15px; margin-left: 1px; border-radius: 50%; border: 2px solid #8a8a8a; background: radial-gradient(circle, #999 3.6px, #3c3c3c 4.4px); }
    .row.dim input[type="radio"] { width: 9px; height: 9px; margin-left: 4px; border: 0; background: #4c4c4c; }
    .row input[type="checkbox"] { appearance: none; width: 13px; height: 13px; border: 1px solid #b0b0b0; border-radius: 2px; }
    .text { border-radius: 4px; display: block; }
    .pick { display: flex; align-items: center; gap: 3px; }
    .pick .text { flex: 1; width: auto; border-radius: 4px 0 0 4px; height: 18px; }
    .drop { width: 12px; height: 18px; background: #595959; display: grid; place-items: center; margin-left: -2px; border-radius: 0 3px 3px 0; }
    .swatch { width: 76px; height: 17px; border: 1px solid #4e4e4e; }
    .dimrow { display: flex; align-items: center; gap: 7px; margin-left: -6px; }
    .dimrow .swatch { margin-left: -7px; }
    .avatar { position: absolute; right: 15px; top: -35px; }
    .popup { position: absolute; z-index: 5; top: 22px; left: 0; width: 249px; background: #3c3c3c; border: 1px solid #565656; border-radius: 3px; padding: 2px 2px 2px; color: #cdcdcd; }
    .dots { height: 5px; margin: 0 3px 1px; background: radial-gradient(circle, #8c8c8c 0.7px, transparent 1px) 0 0 / 3px 3px; }
    .popup ul { list-style: none; margin: 0 0 0 1px; padding: 0; background: linear-gradient(90deg, #595959 21px, transparent 21px); }
    .popup ul + ul { margin-top: 7px; position: relative; }
    .popup ul + ul::before { content: ""; position: absolute; left: 2px; right: 5px; top: -4px; height: 1px; background: #525252; }
    .popup li button { display: grid; grid-template-columns: 25px 1fr auto; align-items: center; width: 242px; height: 22px; text-align: left; padding: 0 12px 0 1px; }
    .popup li button.gearrow { padding-right: 3px; }
    .popup li .key { margin-right: 12px; }
    .popup .dim { color: #777; }
    .popup .on { background: #989898; color: #0c0c0c; }
    .mark { position: absolute; left: 0; top: 571px; width: 251px; height: 40px; border: 2px solid #ee1c24; }
  `;

  private buttons(map: Record<string, unknown>, names: string, w: number, h: number) {
    return names.split(" ").map((n) => {
      const on = n.startsWith("+"), warn = n.startsWith("!");
      const key = n.replace(/^[+!]/, "");
      return html`<button class=${classMap({ tb: true, on, warn })} aria-label=${key}>${icon(w, h, map[key])}</button>`;
    });
  }

  private popup() {
    return html`<div class="popup"><div class="dots"></div>
      ${MENU.map((g) => html`<ul>${g.map((m) => html`<li><button class=${classMap({ dim: !!m.dim, hot: !!m.hot, on: !!m.on, gearrow: !!m.gear })}>
        <span>${m.i ? icon(19, 19, MI[m.i]) : nothing}</span><span>${m.t}</span>
        ${m.k ? html`<span class="key">${m.k}</span>` : m.sub ? icon(5, 8, svg`<path d="M1 1L4.500 4.500L1 8Z" fill="#d6d6d6"/>`) : m.gear ? icon(14, 14, svg`<g transform="scale(.8)"><path d=${gearPath} fill="#1b1b1b" fill-rule="evenodd"/></g>`) : nothing}
      </button></li>`)}</ul>`)}
      <div class="mark"></div></div>`;
  }

  private ruler() {
    const pct = (i: number) => `${(i / 90) * 100}%`;
    return html`<svg class="scale" aria-hidden="true">
      <line x1="-5" x2="100%" y1="18.500" y2="18.500" stroke="#8f8f8f"/>
      ${Array.from({ length: 91 }, (_, i) => svg`<line x1=${pct(i)} x2=${pct(i)} y1=${i % 30 ? 21 : 3} y2=${i % 5 ? 23 : 24} stroke=${i % 30 ? "#c8c8c8" : "#a8a8a8"}/>`)}
      ${Array.from({ length: 19 }, (_, i) => svg`<text x=${pct(i * 5)} y="12" text-anchor="middle">${i * 5}</text>`)}
    </svg>`;
  }

  private row(label: string, body: unknown, dots = "", radio = true, dim = false) {
    return html`<div class=${classMap({ row: true, dim })}>
      ${radio ? html`<input type="radio" aria-label=${label} />` : html`<span></span>`}
      <span class="lab">${label}${dots}</span>${body}</div>`;
  }

  render() {
    return html`
      <header class="title">
        ${icon(16, 16, svg`<circle cx="8" cy="8.500" r="7.500" fill="#c9cfdc"/><circle cx="7.300" cy="8.800" r="6.300" fill="#0b1a52"/><circle cx="9.500" cy="6.500" r="3.600" fill="#8ea6dc"/><circle cx="10.500" cy="5.500" r="2" fill="#f4f7ff"/>`)}
        <h1>Cinema 4D R21.207 (RC) - [未标题 1 *] - 主要</h1>
        <button class="win" aria-label="最小化">${icon(11, 11, svg`<path d="M0 5.500h10" stroke="#000"/>`)}</button>
        <button class="win" aria-label="还原">${icon(11, 11, svg`<path d="M2.500 2.500V.5H10.500V8.500H8.500M.5 2.500H8.500V10.500H.5Z" fill="none" stroke="#000"/>`)}</button>
        <button class="win" aria-label="关闭">${icon(11, 11, svg`<path d="M.5 .5L10.500 10.500M10.500 .5L.5 10.500" stroke="#000" stroke-width="1.100"/>`)}</button>
      </header>
      <nav class="menubar">
        ${MAIN_MENU.map((m) => m === "*扩展" ? html`<div class="open"><button class="mi">扩展</button>${this.popup()}</div>` : menus(m))}
        <span class="push"></span>
        <div class="opt"><span>节点空间:</span>&nbsp;${select("节点空间", "当前 (标准/物理)")}</div>
        <div class="opt wide"><span>界面:</span>${select("界面", "启动")}</div>
        <button class="find" aria-label="搜索">${glass}</button>
      </nav>
      <div class="body">
        <div class="main">
          <div class="tools"><span class="grip"></span>
            <div class="group first">${this.buttons(TB, "undo redo", 35, 34)}</div>
            <div class="group">${this.buttons(TB, "select +move scale rotate", 35, 34)}</div>
            <div class="group near">${this.buttons(TB, "psr", 35, 34)}</div>
            <div class="group near">${this.buttons(TB, "move2", 35, 34)}</div>
            <div class="group">${this.buttons(TB, "+X +Y +Z coord", 35, 34)}</div>
            <div class="group">${this.buttons(TB, "clap1 clap2 !clap3", 35, 34)}</div>
            <div class="group late">${this.buttons(TB, "array bend", 35, 34)}</div>
            <div class="group near">${this.buttons(TB, "floor camera bulb", 35, 34)}</div>
          </div>
          <div class="work">
            <div class="modes"><div class="hgrip"></div>
              <div class="group">${this.buttons(MB, "convert", 34, 34)}</div>
              <div class="group tight">${this.buttons(MB, "+model texture", 34, 34)}</div>
              <div class="group tight">${this.buttons(MB, "points edges polys", 34, 34)}</div>
              <div class="group">${this.buttons(MB, "+axis", 34, 34)}</div>
              <div class="group">${this.buttons(MB, "+snapG snapO snapW", 34, 34)}</div>
              <div class="group">${this.buttons(MB, "magnet", 34, 34)}</div>
              <div class="group">${this.buttons(MB, "grid +gridLock gridRot", 34, 34)}</div>
            </div>
            <div class="center">
              <div class="phead view">${bars}${menus("查看 摄像机 显示 *选项 过滤 面板 ProRender")}
                <div class="icons">
                  ${icon(14, 15, svg`<path d="M7 0l3.500 4.500H3.500zM7 15l3.500-4.500H3.500zM0 7.500L4.500 4v7zM14 7.500L9.500 4v7z" fill="#999"/><path d="M7 3v3M7 9v3M3 7.500h2.500M8.500 7.500H11" stroke="#999" stroke-width="1.600"/>`)}
                  ${icon(14, 15, svg`<path d="M7 0l4 4.500H8.200V9H13L7 15L1 9H5.800V4.500H3z" fill="#999"/><path d="M7 12.800L4 10.200h6z" fill="#3c3c3c"/>`)}
                  ${icon(14, 15, svg`<path d="M5 13A6 6 0 0 1 4 3M9 2A6 6 0 0 1 10 12" fill="none" stroke="#999" stroke-width="1.600"/><path d="M2 14h5V10zM12 1H7v4z" fill="#999"/>`)}
                  ${icon(14, 15, svg`<path d="M.7 1.500h12.600v12H.7zM.7 7.500H7.500V13.500" fill="none" stroke="#999" stroke-width="1.400"/>`)}
                </div></div>
              <div class="view-box">${scene}<span class="tag">透视视图</span><span class="tag br">网格间距 : 100 cm</span></div>
              <div class="ruler"><span class="grip"></span>${this.ruler()}${num("当前帧", "45 F", false)}</div>
              <div class="play"><span class="grip"></span>${num("起始帧", "0 F", false)}
                <label class="range"><input type="range" min="0" max="90" value="0" aria-label="时间范围" /><span>0 F</span></label>
                ${num("结束帧", "90 F", false)}
                <div class="group">${this.buttons(PB, "first", 27, 26)}</div>
                <div class="group">${this.buttons(PB, "prevKey prev play next nextKey", 27, 26)}</div>
                <div class="group">${this.buttons(PB, "last", 27, 26)}</div>
                <div class="group">${this.buttons(PB, "key auto", 27, 26)}</div>
                <div class="group">${this.buttons(PB, "opts", 27, 26)}</div>
                <div class="group near">${this.buttons(PB, "+move +scale +rotate +P dots", 27, 26)}</div>
                <div class="group">${this.buttons(PB, "+film", 27, 26)}</div>
              </div>
              <div class="bottom">
                <section class="panel mat"><div class="phead">${bars}${menus("*创建 *编辑 查看 选择 材质 纹理")}</div></section>
                <section class="panel coords"><div class="phead">${bars}<b>位置</b><b>尺寸</b><b>旋转</b></div>
                  <div class="cgrid">
                    ${num("X", "0 cm")}${num("X", "200 cm")}${num("H", "0 °")}
                    ${num("Y", "0 cm")}${num("Y", "200 cm")}${num("P", "0 °")}
                    ${num("Z", "0 cm")}${num("Z", "200 cm")}${num("B", "0 °")}
                    ${select("坐标模式", "对象 (相对)")}${select("尺寸模式", "绝对尺寸")}<button class="apply">应用</button>
                  </div></section>
              </div>
            </div>
          </div>
          <footer class="status">${bars}<span>MagicCenter 1.0 By Nitro4d.com</span></footer>
        </div>
        <aside class="side">
          <div class="dock obj">
            <section class="panel"><div class="phead">${bars}${menus("文件 编辑 *查看 对象 *标签 书签")}
              <div class="icons">${glass}
                ${icon(16, 15, svg`<path d="M8 1L15 8H12.500V14H3.500V8H1Z" fill="none" stroke="#999" stroke-width="1.200"/>`)}
                ${icon(14, 15, svg`<path d="M.5 1H13.500L8.500 7.500V12L5.500 14V7.500Z" fill="none" stroke="#999" stroke-width="1.300"/>`)}
                ${plusBox}</div></div>
              <div class="tree">
                <div class="node">
                  <span>${icon(16, 21, svg`<path d="M8.500 0V12.500H16" fill="none" stroke="#777"/>`)}${polySmall}<span class="name">立方体</span></span>
                  <span>${icon(36, 18, svg`<rect x="2" y="3" width="12" height="12" rx="2" fill="#8b8b8b"/><path d="M5 12L11 6" stroke="#444" stroke-width="1.200"/><circle cx="21" cy="5.500" r="2.500" fill="#8b8b8b"/><circle cx="21" cy="13" r="2.500" fill="#8b8b8b"/>`)}</span>
                  <span>${icon(36, 18, svg`<circle cx="6" cy="5.500" r="3.600" fill="#c87a2e"/><circle cx="12.500" cy="12" r="3.800" fill="#c87a2e"/><rect x="22.500" y="2.500" width="13" height="13" fill="#f3f3f3" stroke="#d37a2b"/><path d="M24 4h3.300v3.300H24zM30.700 4H34v3.300h-3.300zM27.300 7.300h3.400v3.400h-3.400zM24 10.700h3.300V14H24zM30.700 10.700H34V14h-3.300z" fill="#111"/>`)}</span>
                </div>
                <div class="cols"><i></i><i></i></div>
              </div></section>
            <div class="tabs"><button class="on">对象</button><button>场次</button><button>内容浏览器</button></div>
          </div>
          <div class="dock att">
            <section class="panel"><div class="phead">${bars}${menus("模式 编辑 用户数据")}
              <div class="icons">
                ${icon(14, 15, svg`<path d="M14 7.500H1M5 3L1 7.500L5 12" fill="none" stroke="#5c5c5c" stroke-width="1.400"/>`)}
                ${icon(14, 15, svg`<path d="M0 7.500H13M9 3L13 7.500L9 12" fill="none" stroke="#5c5c5c" stroke-width="1.400"/>`)}
                ${icon(14, 15, svg`<path d="M7 14.500V2M2 6.500L7 1.500L12 6.500" fill="none" stroke="#b0b0b0" stroke-width="1.700"/>`)}
                ${glass}
                ${icon(14, 15, svg`<rect x="1.500" y="4" width="11" height="10" rx="1" fill="none" stroke="#999" stroke-width="1.300"/><path d="M7 8v3" stroke="#999" stroke-width="2"/>`)}
                ${icon(14, 15, svg`<circle cx="7" cy="7.500" r="6.300" fill="none" stroke="#999" stroke-width="1.300"/><circle cx="7" cy="7.500" r="2" fill="none" stroke="#999"/>`)}
                ${plusBox}</div></div>
              <div class="what">${polyObj}<span>多边形对象 [立方体]</span></div>
              <div class="seg"><button class="on">基本</button><button>坐标</button><button>平滑着色(Phong)</button></div>
              <h2>基本属性</h2>
              <button class="fold">${icon(5, 8, svg`<path d="M0 0L4.500 4L0 8Z" fill="#d6d6d6"/>`)}图标设置</button>
              <div class="rows">
                ${this.row("名称", html`<input class="text" type="text" aria-label="名称" .value=${"立方体"} />`, " . . . .", false)}
                ${this.row("图层", html`<span class="pick"><input class="text" type="text" aria-label="图层" /><button class="drop" aria-label="选择图层">${chevron}</button>
                  ${icon(20, 18, svg`<circle cx="10" cy="9" r="8.200" fill="none" stroke="#9a9a9a" stroke-width="1.300"/><path d="M6 4.500L14.500 8.500L11.300 10L14 13L12.500 14L10 11L8 13.500Z" fill="#b0b0b0"/>`)}</span>`, " . . . .", false)}
              </div>
              <div class="rows">${this.row("编辑器可见", select("编辑器可见", "默认"))}${this.row("渲染器可见", select("渲染器可见", "默认"))}</div>
              <div class="rows">${this.row("显示颜色", select("显示颜色", "关闭"), " .")}
                ${this.row("颜色", html`<span class="dimrow">${icon(6, 10, svg`<path d="M1 1L5 5L1 9" fill="none" stroke="#999" stroke-width="1.300"/>`)}<span class="swatch"></span>${icon(18, 18, svg`<path d="M2 16L4 12L10.500 5.500L13 8L6 15Z" fill="none" stroke="#5a5a5a" stroke-width="1.400"/><path d="M10 4L14.500 8.500M11.500 6L15 2" stroke="#5a5a5a" stroke-width="3"/>`)}</span>`, " . . .", true, true)}
                ${this.row("透显", html`<input type="checkbox" aria-label="透显" />`, " . . . .")}
              </div>
              <div class="avatar">${icon(50, 50, svg`<circle cx="25" cy="25" r="24" fill="#fff" stroke="#2483ee" stroke-width="2.200"/><circle cx="25" cy="25" r="21" fill="#fff" stroke="#1b1b1b" stroke-width="1.600"/>
                <path d="M25 21C29 21 30 24 28.500 27L26.500 31H23.500L21.500 27C20 24 21 21 25 21Z" fill="#111"/><path d="M22.500 22C18 20 15 16 14 12M18.500 19C16 19 14.500 18 13.500 17M19.500 19C19.500 17 19 15 18.500 13M27.500 22C32 20 35 16 36 12M31.500 19C34 19 35.500 18 36.500 17M30.500 19C30.500 17 31 15 31.500 13" fill="none" stroke="#111" stroke-width="1.500"/>
                <text x="25" y="40" text-anchor="middle" font-size="6" font-weight="700" fill="#111">行鹿客</text>`)}</div>
            </section>
            <div class="tabs"><button class="on">属性</button><button>层</button><button>构造</button></div>
          </div>
        </aside>
      </div>`;
  }
}
